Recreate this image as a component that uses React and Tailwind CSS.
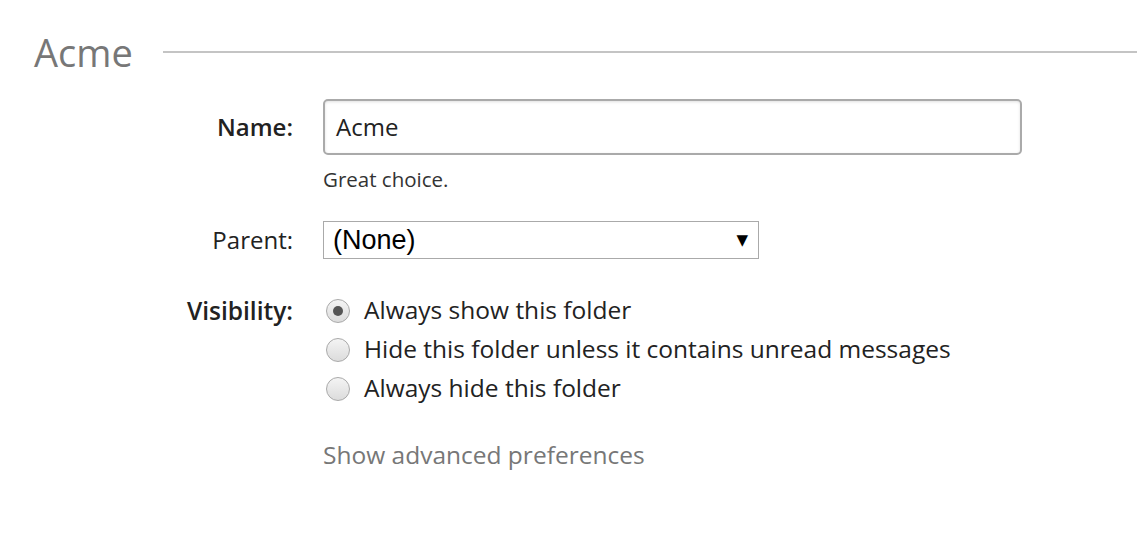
import React from 'react';

const font = { fontFamily: '"Open Sans", "Noto Sans", sans-serif' };

function Radio({ checked, children }) {
  return (
    <label className="flex items-center h-[39px]">
      <span className="ml-[3px] w-[24px] h-[24px] rounded-full border border-[#a9a9a9] bg-gradient-to-b from-[#f4f4f4] to-[#dcdcdc] flex items-center justify-center shrink-0">
        {checked && <span className="w-[10px] h-[10px] rounded-full bg-[#555]" />}
      </span>
      <span className="ml-[14px] text-[24.5px] text-[#222]">{children}</span>
    </label>
  );
}

export default function App() {
  return (
    <div className="w-[1137px] h-[535px] bg-white overflow-hidden" style={font}>
      <div className="flex items-center pt-[30px]">
        <h1 className="ml-[34px] text-[38px] leading-[44px] text-[#777]">Acme</h1>
        <div className="ml-[30px] flex-1 h-[2px] bg-[#c4c4c4]" />
      </div>

      <div className="grid grid-cols-[293px_1fr] gap-x-[30px] mt-[25px]">
        <div className="flex items-center justify-end h-[56px] text-[24px] font-semibold text-[#222]">Name:</div>
        <div>
          <div className="w-[699px] h-[56px] rounded-[5px] border-2 border-[#aaa] shadow-[inset_0_1px_3px_rgba(0,0,0,0.12)] flex items-center px-[11px] text-[24px] text-[#222]">
            Acme
          </div>
          <div className="mt-[11px] text-[20.5px] text-[#333] leading-[26px]">Great choice.</div>
        </div>

        <div className="flex items-center justify-end h-[38px] mt-[29px] text-[24px] text-[#222]">Parent:</div>
        <div className="mt-[29px] w-[436px] h-[38px] border border-[#aaa] flex items-center justify-between pl-[9px] pr-[10px]">
          <span className="text-[27px] text-black" style={{ fontFamily: '"Liberation Sans", Arial, sans-serif' }}>(None)</span>
          <span className="text-[15px] text-black" style={{ fontFamily: '"DejaVu Sans", sans-serif' }}>▼</span>
        </div>

        <div className="flex items-start justify-end mt-[32px] h-[39px] leading-[39px] text-[24.5px] font-semibold text-[#222]">Visibility:</div>
        <div className="mt-[32px] flex flex-col">
          <Radio checked>Always show this folder</Radio>
          <Radio>Hide this folder unless it contains unread messages</Radio>
          <Radio>Always hide this folder</Radio>
        </div>

        <div />
        <div className="mt-[29px] text-[24.5px] text-[#777]">Show advanced preferences</div>
      </div>
    </div>
  );
}
